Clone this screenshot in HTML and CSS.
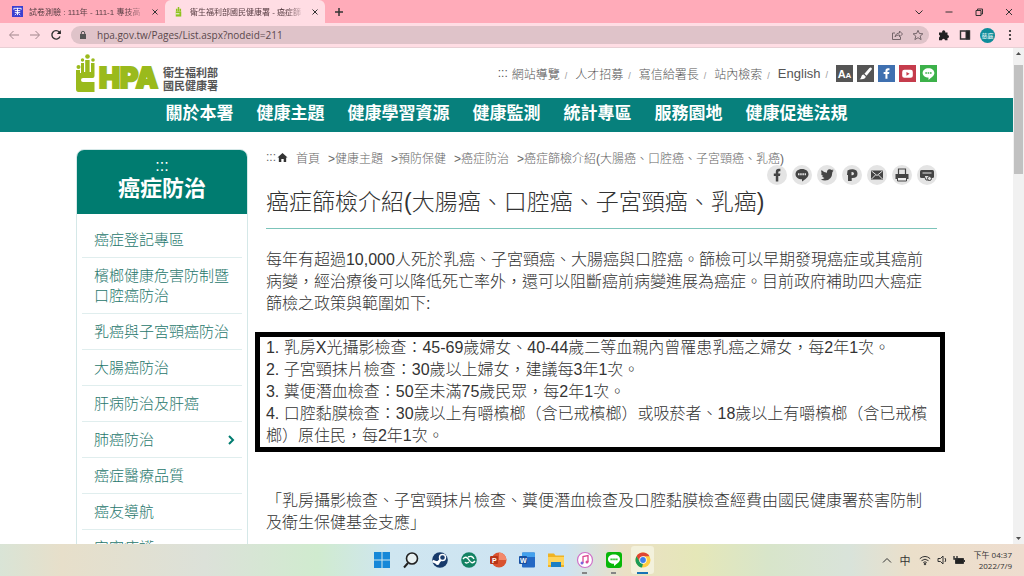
FILE: index.html
```
<!DOCTYPE html>
<html lang="zh-Hant">
<head>
    <meta charset="UTF-8">
    <meta name="viewport" content="width=device-width, initial-scale=1.0">
    <title>衛生福利部國民健康署 - 癌症篩檢介紹</title>
    <link rel="stylesheet" href="styles.css">
</head>
<body>
    <div class="tabbar">
        <div class="tab">
            <svg class="favicon" viewBox="0 0 12 12"><rect width="12" height="12" fill="#3a3fd0"/><path d="M2 4V2.500h8V4M3 5h6M3 7h6M6 2v8M3 10l2-2M9 10L7 8" stroke="#fff" fill="none"/></svg>
            <span class="tab-title">試卷測驗 : 111年 - 111-1 專技高</span>
            <button class="tab-close" aria-label="關閉分頁"><svg viewBox="0 0 8 8"><path d="M1.500 1.500l5 5M6.500 1.500l-5 5"/></svg></button>
        </div>
        <div class="tab active">
            <svg class="favicon" viewBox="0 0 12 12"><path d="M3 6h6v5.500H3z" fill="#8fc31f"/><path d="M4 6V3M6 6V1M8 6V3" stroke="#8fc31f" stroke-width="1.600"/><path d="M3 8.500h4" stroke="#fff"/></svg>
            <span class="tab-title">衛生福利部國民健康署 - 癌症篩</span>
            <button class="tab-close" aria-label="關閉分頁"><svg viewBox="0 0 8 8"><path d="M1.500 1.500l5 5M6.500 1.500l-5 5"/></svg></button>
        </div>
        <button class="new-tab" aria-label="新增分頁"><svg viewBox="0 0 10 10"><path d="M5 1v8M1 5h8"/></svg></button>
        <div class="window-buttons">
            <button aria-label="搜尋分頁"><svg viewBox="0 0 10 10"><path d="M1.500 3.500L5 7l3.500-3.500"/></svg></button>
            <button aria-label="最小化"><svg viewBox="0 0 10 10"><path d="M1.500 5h7"/></svg></button>
            <button aria-label="還原"><svg viewBox="0 0 10 10"><path d="M2 3.500h5v5H2zM3.500 3.500V2h5v5H7"/></svg></button>
            <button aria-label="關閉"><svg viewBox="0 0 10 10"><path d="M2 2l6 6M8 2L2 8"/></svg></button>
        </div>
    </div>

    <div class="toolbar">
        <button aria-label="上一頁" class="dim"><svg viewBox="0 0 12 12"><path d="M11 6H2M5.500 2L1.500 6l4 4"/></svg></button>
        <button aria-label="下一頁" class="dim"><svg viewBox="0 0 12 12"><path d="M1 6h9M6.500 2l4 4-4 4"/></svg></button>
        <button aria-label="重新載入"><svg viewBox="0 0 12 12"><path d="M10 7.500A4.200 4.200 0 1 1 9.200 3L10.500 4.500" stroke-width="1.400"/><path d="M10.800 1v4h-4z" fill="#222" stroke="none"/></svg></button>
        <div class="address">
            <svg viewBox="0 0 10 10"><rect x="2" y="4" width="6" height="5" fill="#555"/><path d="M3.300 4V3a1.700 1.700 0 0 1 3.400 0v1" fill="none" stroke="#555"/></svg>
            <input type="text" aria-label="網址" value="hpa.gov.tw/Pages/List.aspx?nodeid=211">
            <button aria-label="分享" class="soft"><svg viewBox="0 0 12 12"><path d="M4 4H1.500v6.500h8V8M4 8c.5-3 2.500-4 4.500-4V2l3 3-3 3V6C6.500 6 5 6.500 4 8z"/></svg></button>
            <button aria-label="書籤" class="soft"><svg viewBox="0 0 12 12"><path d="M6 1.300l1.400 3.200 3.500.3-2.700 2.300.9 3.500L6 8.700l-3.100 1.900.9-3.500L1.100 4.800l3.500-.3z"/></svg></button>
        </div>
        <div class="tools">
            <button aria-label="擴充功能"><svg viewBox="0 0 12 12"><path d="M1 3.500h3.200a1.600 1.600 0 1 1 3 0H9.500V6a1.500 1.500 0 1 1 0 3v2.300H7A1.500 1.500 0 0 0 4 11.300H1V8.500a1.500 1.500 0 0 0 0-2.800z" fill="#222" stroke="none"/></svg></button>
            <button aria-label="側邊面板"><svg viewBox="0 0 12 12"><path d="M1.500 2h9v8h-9z" stroke-width="1.400"/><path d="M7 2h3.500v8H7z" fill="#222"/></svg></button>
            <button class="profile" aria-label="個人資料">慈庭</button>
            <button aria-label="選單"><svg viewBox="0 0 12 12"><g fill="#222" stroke="none"><circle cx="6" cy="2" r="1.100"/><circle cx="6" cy="6" r="1.100"/><circle cx="6" cy="10" r="1.100"/></g></svg></button>
        </div>
    </div>

    <div class="viewport">
        <div class="page">
            <header class="header container">
                <a class="logo" href="#">
                    <svg class="logo-hand" viewBox="0 0 20 40">
                        <g fill="#9aba1c"><circle cx="2.500" cy="14" r="2"/><circle cx="6.500" cy="7" r="1.700"/><circle cx="11.500" cy="3.500" r="2.300"/><circle cx="17" cy="7" r="1.800"/><path d="M0 17h4v3h1V10h3v9h1.200V7h4.400v12H15V10h3.500v13q0 2-2 2H7q-2 0-2 2t2 2h11.500v10H2.500Q0 39 0 36z"/></g>
                    </svg>
                    <span class="logo-mark">HPA</span>
                    <span class="logo-text">衛生福利部<br>國民健康署</span>
                </a>
                <div class="top-links">
                    <span class="skip">:::</span>
                    <a href="#">網站導覽</a>
                    <a href="#">人才招募</a>
                    <a href="#">寫信給署長</a>
                    <a href="#">站內檢索</a>
                    <a href="#" class="en">English</a>
                    <div class="squares">
                        <a href="#" class="square gray" aria-label="字級"><span class="size-big">A</span><span class="size-small">A</span></a>
                        <a href="#" class="square gray" aria-label="換色"><svg viewBox="0 0 16 16"><path d="M13.500 2.500q1 .8.300 1.800L9 10 7 8.300l4.700-5.500q.8-.8 1.800-.3zM6.200 9l2 1.800Q8 14 2.300 13.300 4 12.500 4 11q.5-2 2.200-2z" fill="#fff"/></svg></a>
                        <a href="#" class="square blue" aria-label="Facebook"><svg viewBox="0 0 16 16"><path d="M7 13V8.500H5.300V6.500H7V5.500q0-2.400 2.400-2.400h1.400V5h-.9q-1 0-1 .9v.6h1.800l-.3 2H8.900V13z" fill="#fff"/></svg></a>
                        <a href="#" class="square red" aria-label="YouTube"><svg viewBox="0 0 16 16"><rect x="3" y="4.500" width="10" height="7.500" rx="2" fill="#fff"/><path d="M7 6.500v3.500l3-1.800z" fill="#c53c4c"/></svg></a>
                        <a href="#" class="square green" aria-label="LINE"><svg viewBox="0 0 16 16"><path d="M8 3c3.300 0 5.500 2 5.500 4.500S11 11.500 8 14v-2.200c-3.300 0-5.500-1.800-5.500-4.300S4.700 3 8 3z" fill="#fff"/><path d="M5 7.500h6" stroke="#3cb14a" stroke-width="1.500" stroke-dasharray="1.500 .7"/></svg></a>
                    </div>
                </div>
            </header>

            <nav class="main-nav">
                <a href="#">關於本署</a>
                <a href="#">健康主題</a>
                <a href="#">健康學習資源</a>
                <a href="#">健康監測</a>
                <a href="#">統計專區</a>
                <a href="#">服務園地</a>
                <a href="#">健康促進法規</a>
            </nav>

            <div class="columns container">
                <aside class="sidebar">
                    <h2><span>:::</span>癌症防治</h2>
                    <ul>
                        <li><a href="#">癌症登記專區</a></li>
                        <li><a href="#">檳榔健康危害防制暨口腔癌防治</a></li>
                        <li><a href="#">乳癌與子宮頸癌防治</a></li>
                        <li><a href="#">大腸癌防治</a></li>
                        <li><a href="#">肝病防治及肝癌</a></li>
                        <li><a href="#">肺癌防治<svg class="arrow" viewBox="0 0 8 10"><path d="M2 1l4 4-4 4"/></svg></a></li>
                        <li><a href="#">癌症醫療品質</a></li>
                        <li><a href="#">癌友導航</a></li>
                        <li><a href="#">安寧療護</a></li>
                    </ul>
                </aside>

                <main class="content">
                    <div class="breadcrumb">
                        <span>:::</span><svg viewBox="0 0 12 12"><path d="M6 1l5.500 5H10v5H7.300V7.500H4.700V11H2V6H.5z" fill="#333"/></svg>
                        <a href="#">首頁</a>
                        <a href="#">&gt;健康主題</a>
                        <a href="#">&gt;預防保健</a>
                        <a href="#">&gt;癌症防治</a>
                        <a href="#">&gt;癌症篩檢介紹(大腸癌、口腔癌、子宮頸癌、乳癌)</a>
                    </div>
                    <div class="share">
                        <a href="#" aria-label="Facebook"><svg viewBox="0 0 20 20"><path d="M8.800 16.500V11H6.800V8.500h2V6.800q0-3 3-3h1.600v2.500h-1.200q-.9 0-.9 1v1.200h2.100l-.4 2.500h-1.700v5.500z"/></svg></a>
                        <a href="#" aria-label="LINE"><svg viewBox="0 0 20 20"><path d="M10 4c4 0 6.500 2.300 6.500 5.200S13.500 14 10 16.500v-2.300c-4 0-6.500-2.100-6.500-5S6 4 10 4z"/><path d="M6 9.200h8" stroke="#e4e4e4" stroke-width="2" stroke-dasharray="1.500 .7"/></svg></a>
                        <a href="#" aria-label="Twitter"><svg viewBox="0 0 20 20"><path d="M4.500 5Q7 7.700 10 7.800 9.700 4.300 12.700 4.200q1.200 0 2 .9l1.700-.7-1 1.500 1.400-.3-1.400 1.500Q15 15.500 8 15.500q-2.400 0-4.300-1.300 2.300.1 3.800-1.200-1.900-.3-2.400-1.900h1.200Q4 10.300 4 8.300l1 .3Q3.500 7 4.500 5z"/></svg></a>
                        <a href="#" aria-label="Plurk"><svg viewBox="0 0 20 20"><path fill-rule="evenodd" d="M5.500 5.500Q8 4 11 4.200q4.500.4 4.500 4.500 0 4.300-5 4.300l-.8-.1V16H6V10H5zM9.500 7v3.200Q12 10.600 12 8.600 12 6.700 9.500 7z"/></svg></a>
                        <a href="#" aria-label="電子郵件"><svg viewBox="0 0 20 20"><rect x="4" y="5.500" width="12" height="9"/><path d="M4.500 6l5.500 4.500L15.500 6M4.500 14L8.500 10M15.500 14l-4-4" fill="none" stroke="#e4e4e4"/></svg></a>
                        <a href="#" aria-label="列印"><svg viewBox="0 0 20 20"><path d="M6.500 9V4h7v5" fill="none" stroke="#444" stroke-width="1.200"/><path d="M3.500 9h13v5h-13z"/><path d="M5.500 12.500h9V16h-9z" fill="#eee" stroke="#444"/></svg></a>
                        <a href="#" aria-label="下載"><svg viewBox="0 0 20 20"><rect x="3" y="5" width="14" height="8" rx="1.500"/><path d="M5.500 8h9" stroke="#e4e4e4"/><path d="M7 10.500h6V15H9z" fill="#ddd" stroke="#444"/><circle cx="12.500" cy="13.500" r="2" fill="#ddd" stroke="#444"/></svg></a>
                    </div>
                    <h1>癌症篩檢介紹(大腸癌、口腔癌、子宮頸癌、乳癌)</h1>
                    <p>每年有超過10,000人死於乳癌、子宮頸癌、大腸癌與口腔癌。篩檢可以早期發現癌症或其癌前病變，經治療後可以降低死亡率外，還可以阻斷癌前病變進展為癌症。目前政府補助四大癌症篩檢之政策與範圍如下:</p>
                    <div class="notice">
                        <p>1. 乳房X光攝影檢查：45-69歲婦女、40-44歲二等血親內曾罹患乳癌之婦女，每2年1次。</p>
                        <p>2. 子宮頸抹片檢查：30歲以上婦女，建議每3年1次。</p>
                        <p>3. 糞便潛血檢查：50至未滿75歲民眾，每2年1次。</p>
                        <p>4. 口腔黏膜檢查：30歲以上有嚼檳榔（含已戒檳榔）或吸菸者、18歲以上有嚼檳榔（含已戒檳榔）原住民，每2年1次。</p>
                    </div>
                    <p class="funding">「乳房攝影檢查、子宮頸抹片檢查、糞便潛血檢查及口腔黏膜檢查經費由國民健康署菸害防制及衛生保健基金支應」</p>
                </main>
            </div>
        </div>
        <div class="scrollbar">
            <svg viewBox="0 0 11 11"><path d="M3 7l2.500-3L8 7z"/></svg>
            <div class="thumb"></div>
            <svg viewBox="0 0 11 11"><path d="M3 4l2.500 3L8 4z"/></svg>
        </div>
    </div>

    <footer class="taskbar">
        <div class="apps">
            <button aria-label="開始"><svg viewBox="0 0 18 18"><path d="M1 1h7.500v7.500H1zM9.500 1H17v7.500H9.500zM1 9.500h7.500V17H1zM9.500 9.500H17V17H9.500z" fill="#1688d8"/></svg></button>
            <button aria-label="搜尋"><svg viewBox="0 0 18 18"><circle cx="10" cy="7.500" r="5.500" fill="#e8f1f2" stroke="#222" stroke-width="1.600"/><path d="M6 12l-4 4.500" stroke="#222" stroke-width="2"/></svg></button>
            <button aria-label="Steam"><svg viewBox="0 0 18 18"><circle cx="9" cy="9" r="7.800" fill="#173a6b"/><path d="M1.500 10l5 2 4-4" stroke="#fff" stroke-width="2.600" fill="none"/><circle cx="11.500" cy="6.500" r="3" fill="#173a6b" stroke="#fff" stroke-width="1.400"/><circle cx="6.500" cy="12" r="2" fill="#fff"/></svg></button>
            <button aria-label="雲端"><svg viewBox="0 0 18 18"><circle cx="9" cy="9" r="7.800" fill="#138263"/><path d="M3 8q3-4 6 1t6 1M5 11q1 2 4 0M8 6q4-2 6 2" stroke="#fff" stroke-width="1.400" fill="none"/></svg></button>
            <button aria-label="PowerPoint"><svg viewBox="0 0 18 18"><circle cx="10" cy="9" r="7.500" fill="#d8522f"/><path d="M10 1.500A7.500 7.500 0 0 1 17.500 9H10z" fill="#f3896b"/><rect x="1" y="5" width="8" height="8" rx="1" fill="#b83518"/><text x="3" y="11.500" class="app-letter">P</text></svg></button>
            <button aria-label="Word"><svg viewBox="0 0 18 18"><rect x="4" y="1.500" width="13" height="15" rx="1" fill="#2368c4"/><path d="M4 2.500q0-1 1-1h11q1 0 1 1V6H4z" fill="#43a1ed"/><rect x="1" y="5" width="8" height="8" rx="1" fill="#174fa0"/><text x="2" y="11.500" class="app-letter">W</text></svg></button>
            <button aria-label="檔案總管"><svg viewBox="0 0 18 18"><path d="M1 2.500h6l1.500 2H17V16H1z" fill="#f0b322"/><path d="M1 6h16v8H1z" fill="#ffd45b"/><path d="M4 11h10v5H4z" fill="#1c7fc4"/></svg></button>
            <button aria-label="iTunes" class="running"><svg viewBox="0 0 18 18"><circle cx="9" cy="9" r="7.500" fill="#fff" stroke="#cf70c8" stroke-width="1.200"/><path d="M7 12V5.500l5-1V11" fill="none" stroke="#dc4a92" stroke-width="1.300"/><circle cx="6" cy="12" r="1.500" fill="#7a65dc"/><circle cx="11" cy="11" r="1.500" fill="#dc4a92"/></svg></button>
            <button aria-label="LINE" class="running"><svg viewBox="0 0 18 18"><rect x="1" y="1" width="16" height="16" rx="3" fill="#08b708"/><path d="M9 3.500c3.600 0 6 2 6 4.700S12 12.500 9 15v-2.200c-3.600 0-6-2-6-4.600s2.400-4.700 6-4.700z" fill="#fff"/><path d="M5.500 8.300h7" stroke="#08b708" stroke-width="1.800" stroke-dasharray="1.300 .6"/></svg></button>
            <button aria-label="Chrome" class="running current"><svg viewBox="0 0 18 18"><circle cx="9" cy="9" r="7.500" fill="#ffcd40"/><path d="M2.500 5.300A7.500 7.500 0 0 1 15.500 5.300H9L6 11z" fill="#df4534"/><path d="M2.500 5.300L6 11l3 1.500-1 4A7.500 7.500 0 0 1 2.500 5.300z" fill="#1b9b58"/><circle cx="9" cy="9" r="3.700" fill="#fff"/><circle cx="9" cy="9" r="2.900" fill="#3b7ded"/></svg></button>
        </div>
        <div class="tray">
            <svg viewBox="0 0 12 12"><path d="M2 8.500l4-4 4 4"/></svg>
            <span class="ime">中</span>
            <svg viewBox="0 0 12 12"><path d="M.8 4.700q5.200-4.500 10.400 0M2.500 6.700q3.500-3 7 0M4.300 8.500q1.700-1.400 3.400 0"/><circle cx="6" cy="10" r=".8" fill="#222"/></svg>
            <svg viewBox="0 0 12 12"><path d="M2 4.500h2.500L7 2v8L4.500 7.500H2zM9 4q1.500 2 0 4"/></svg>
            <svg viewBox="0 0 12 12"><path d="M2.500 4.500h8v5h-8z" fill="#222"/><path d="M11.500 6v2M1 2v3h3V2" stroke-width="1.400"/></svg>
            <div class="clock">下午 04:37<br>2022/7/9</div>
        </div>
    </footer>
</body>
</html>
```
FILE: styles.css
```
* {
    box-sizing: border-box;
}

body {
    margin: 0;
    height: 100vh;
    display: flex;
    flex-direction: column;
    overflow: hidden;
    background-color: #fff;
    color: #333;
    font-family: "Liberation Sans", "Noto Sans CJK TC", sans-serif;
    font-size: 16px;
}

a {
    color: inherit;
    text-decoration: none;
}

button {
    padding: 0;
    border: none;
    background: none;
    font-family: inherit;
    cursor: pointer;
}

svg {
    display: block;
}

/* browser window */
.tabbar {
    display: flex;
    align-items: center;
    height: 23px;
    flex-shrink: 0;
    background-color: #ffabb9;
}

.tab {
    display: flex;
    align-items: center;
    gap: 6px;
    width: 165px;
    height: 23px;
    padding: 0 6px 0 12px;
}

.tab.active {
    width: 160px;
    background-color: #ffdde4;
    border-radius: 6px 6px 0 0;
    padding-left: 8px;
}

.favicon {
    width: 11px;
    height: 11px;
    flex-shrink: 0;
}

.tab-title {
    flex: 1;
    white-space: nowrap;
    font-size: 8px;
    color: #5b4046;
    -webkit-mask-image: linear-gradient(to right, #000 85%, transparent);
    mask-image: linear-gradient(to right, #000 85%, transparent);
}

.tab-close svg {
    width: 8px;
    height: 8px;
}

.tabbar button svg,
.toolbar button svg {
    fill: none;
    stroke: #333;
}

.new-tab {
    margin-left: 9px;
}

.new-tab svg {
    width: 10px;
    height: 10px;
    stroke-width: 1.5;
}

.window-buttons {
    display: flex;
    gap: 20px;
    margin-left: auto;
    padding-right: 10px;
}

.window-buttons svg {
    width: 10px;
    height: 10px;
}

.toolbar {
    display: flex;
    align-items: center;
    gap: 9px;
    height: 25px;
    flex-shrink: 0;
    padding: 0 8px;
    background-color: #ffdde4;
    border-bottom: 1px solid #e8cfd4;
}

.toolbar button svg {
    width: 12px;
    height: 12px;
}

.toolbar .dim svg {
    stroke: #a0858b;
}

.toolbar .soft svg {
    stroke: #75656a;
}

.address {
    flex: 1;
    display: flex;
    align-items: center;
    gap: 9px;
    height: 18px;
    padding: 0 5px 0 7px;
    border-radius: 9px;
    background-color: #dfc3c9;
}

.address > svg {
    width: 10px;
    height: 10px;
}

.address input {
    flex: 1;
    min-width: 0;
    padding: 0;
    border: none;
    outline: none;
    background: none;
    color: #5a484c;
    font-family: "Open Sans", "Noto Sans", sans-serif;
    font-size: 10px;
}

.tools {
    display: flex;
    align-items: center;
    gap: 9px;
}

.toolbar .profile {
    width: 15px;
    height: 15px;
    border-radius: 50%;
    background-color: #0e8c9a;
    color: #fff;
    font-size: 6px;
}

/* web page */
.viewport {
    flex: 1;
    min-height: 0;
    display: flex;
}

.page {
    flex: 1;
    overflow: hidden;
}

.container {
    width: 85%;
    margin: 0 auto;
}

.header {
    display: flex;
    justify-content: space-between;
    align-items: center;
    height: 50px;
}

.logo {
    display: flex;
    align-items: flex-end;
    height: 40px;
}

.logo-hand {
    width: 20px;
    height: 40px;
}

.logo-mark {
    margin-left: 3px;
    color: #9aba1c;
    -webkit-text-stroke: 2px #9aba1c;
    font-family: Inter, Lato, sans-serif;
    font-size: 28px;
    font-weight: 900;
    line-height: 29px;
}

.logo-text {
    margin-left: 5px;
    color: #555;
    font-size: 11px;
    font-weight: bold;
    line-height: 13px;
}

.top-links {
    display: flex;
    align-items: center;
    font-size: 12px;
    font-weight: 300;
    color: #555;
}

.skip {
    margin-right: 4px;
}

.top-links > a::after {
    content: "/";
    margin: 0 8px 0 5px;
    font-size: 9px;
    color: #999;
}

.top-links .en {
    font-size: 13px;
}

.squares {
    display: flex;
    gap: 4px;
}

.square {
    display: flex;
    justify-content: center;
    align-items: baseline;
    width: 17px;
    height: 17px;
    color: #fff;
    font-weight: bold;
    line-height: 18px;
}

.square svg {
    width: 17px;
    height: 17px;
}

.size-big {
    font-size: 11px;
}

.size-small {
    font-size: 8px;
}

.gray {
    background-color: #555;
}

.blue {
    background-color: #3f70b0;
}

.red {
    background-color: #c53c4c;
}

.green {
    background-color: #3cb14a;
}

.main-nav {
    display: flex;
    justify-content: center;
    height: 34px;
    gap: 23px;
    background-color: #07807c;
    color: #fff;
    font-size: 17px;
    font-weight: bold;
    line-height: 32px;
}

.columns {
    display: flex;
    align-items: flex-start;
    gap: 18px;
    padding-top: 17px;
}

.sidebar {
    width: 172px;
    flex-shrink: 0;
    border: 1px solid #d5e8e8;
    border-radius: 8px 8px 0 0;
}

.sidebar h2 {
    margin: 0;
    height: 64px;
    padding-top: 9px;
    border-radius: 7px 7px 0 0;
    background-color: #007c70;
    color: #fff;
    font-size: 22px;
    line-height: 32px;
    text-align: center;
}

.sidebar h2 span {
    display: block;
    font-size: 16px;
    font-weight: normal;
    line-height: 14px;
}

.sidebar ul {
    margin: 0;
    padding: 8px 5px;
    list-style: none;
}

.sidebar li {
    padding: 8px 7px 7px 12px;
    border-bottom: 1px solid #e0eeee;
    color: #27776c;
    font-size: 15px;
    font-weight: 300;
    line-height: 20px;
}

.sidebar li a {
    display: flex;
    justify-content: space-between;
    align-items: center;
}

.arrow {
    width: 8px;
    height: 10px;
    fill: none;
    stroke: #007c70;
    stroke-width: 2;
}

.content {
    flex: 1;
    min-width: 0;
    font-weight: 300;
}

.breadcrumb {
    display: flex;
    align-items: center;
    gap: 8px;
    height: 16px;
    font-size: 12px;
    color: #666;
    white-space: nowrap;
}

.breadcrumb span {
    margin-right: -7px;
}

.breadcrumb svg {
    width: 11px;
    height: 11px;
}

.share {
    display: flex;
    justify-content: flex-end;
    gap: 5px;
}

.share a {
    width: 20px;
    height: 20px;
    border-radius: 50%;
    background-color: #e4e4e4;
}

.share svg {
    fill: #444;
}

.content h1 {
    margin: 0 0 20px;
    padding: 2px 0 10px;
    border-bottom: 1px solid #7cc4ba;
    font-size: 23px;
    font-weight: 300;
    line-height: 31px;
}

.content p {
    margin: 0;
    line-height: 22px;
}

.notice {
    margin: 17px -8px 0 -11px;
    padding: 0 3px 0 6px;
    border: 5px solid #000;
}

.content .funding {
    margin-top: 38px;
}

.scrollbar {
    display: flex;
    flex-direction: column;
    width: 11px;
    background-color: #f1f1f1;
}

.scrollbar svg {
    width: 11px;
    height: 11px;
    fill: #505050;
}

.thumb {
    height: 109px;
    margin: 6px 1px auto;
    background-color: #c1c1c1;
}

/* windows taskbar */
.taskbar {
    display: grid;
    grid-template-columns: 1fr auto 1fr;
    align-items: center;
    height: 32px;
    flex-shrink: 0;
    padding: 0 12px;
    background: linear-gradient(to right, #d9e4d6, #e7dfca 6%, #dce1d9 20%, #d0ebcf 31%, #cfe6f0 38%, #cde3f3 55%, #eae0c5 61%, #e5e7b8 68%, #d8e5ca 75%, #d9e3da 83%, #ebdfca 89%, #eeddcf);
}

.apps {
    grid-column: 2;
    display: flex;
    gap: 6px;
}

.apps button {
    display: flex;
    justify-content: center;
    align-items: center;
    width: 23px;
    height: 28px;
    border-radius: 3px;
}

.apps svg {
    width: 18px;
    height: 18px;
}

.apps .running {
    background: linear-gradient(#858585, #858585) center bottom / 5px 2px no-repeat;
}

.apps .current {
    background: linear-gradient(#1673b5, #1673b5) center bottom / 11px 2px no-repeat, #f3f1dc;
}

.app-letter {
    fill: #fff;
    font-size: 7px;
    font-weight: bold;
}

.tray {
    display: flex;
    justify-content: flex-end;
    align-items: center;
    gap: 5px;
    color: #333;
}

.tray svg {
    width: 12px;
    height: 12px;
    fill: none;
    stroke: #333;
}

.ime {
    margin: 0 3px 0 2px;
    font-size: 11px;
}

.clock {
    margin-left: 4px;
    font-family: "Open Sans", "Noto Sans CJK TC", sans-serif;
    font-size: 8px;
    line-height: 11px;
    text-align: right;
}
```
